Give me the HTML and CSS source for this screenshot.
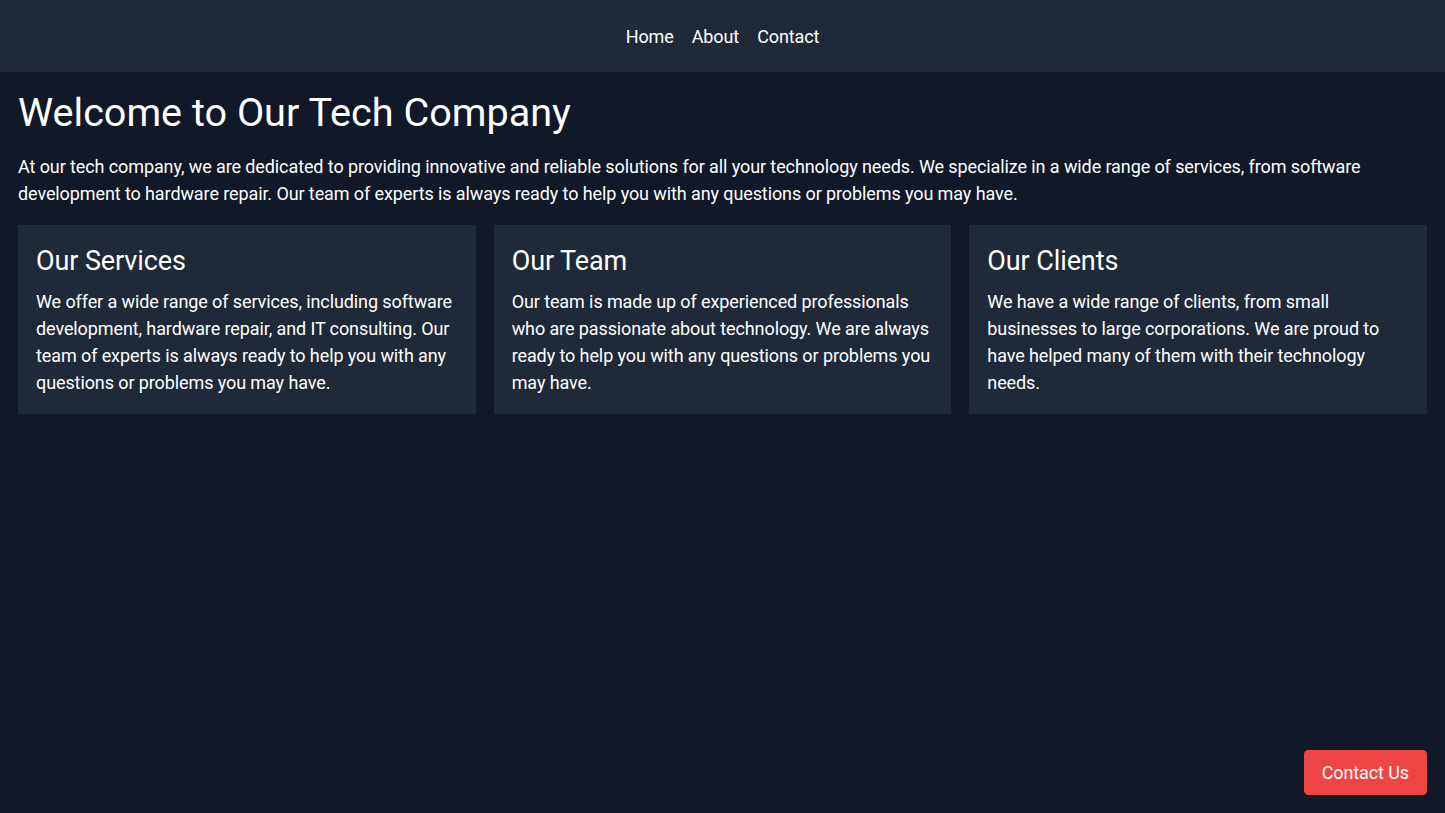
FILE: index.html
```html
<!DOCTYPE html>
<html lang="en">
<head>
<meta charset="utf-8">
<title>Our Tech Company</title>
<link rel="stylesheet" href="styles.css">
</head>
<body>
<header class="site-header">
  <nav class="nav">
    <a href="#" class="nav-link">Home</a>
    <a href="#" class="nav-link">About</a>
    <a href="#" class="nav-link">Contact</a>
  </nav>
</header>
<main class="main">
  <h1 class="title">Welcome to Our Tech Company</h1>
  <p class="intro">At our tech company, we are dedicated to providing innovative and reliable solutions for all your technology needs. We specialize in a wide range of services, from software development to hardware repair. Our team of experts is always ready to help you with any questions or problems you may have.</p>
  <div class="cards">
    <section class="card">
      <h2 class="card-title">Our Services</h2>
      <p class="card-text">We offer a wide range of services, including software development, hardware repair, and IT consulting. Our team of experts is always ready to help you with any questions or problems you may have.</p>
    </section>
    <section class="card">
      <h2 class="card-title">Our Team</h2>
      <p class="card-text">Our team is made up of experienced professionals who are passionate about technology. We are always ready to help you with any questions or problems you may have.</p>
    </section>
    <section class="card">
      <h2 class="card-title">Our Clients</h2>
      <p class="card-text">We have a wide range of clients, from small businesses to large corporations. We are proud to have helped many of them with their technology needs.</p>
    </section>
  </div>
</main>
<a href="#" class="contact-btn">Contact Us</a>
</body>
</html>
```
FILE: styles.css
```css
* { box-sizing: border-box; }
html, body { margin: 0; padding: 0; }
body {
  background: #111827;
  color: #ffffff;
  font-family: Roboto, "Liberation Sans", sans-serif;
  font-size: 18px;
  line-height: 27px;
  letter-spacing: -0.1px;
  min-height: 813px;
}
.site-header {
  background: #1f2937;
  padding: 22.5px 18px;
}
.nav {
  display: flex;
  justify-content: center;
  gap: 18px;
}
.nav-link {
  color: #ffffff;
  text-decoration: none;
  font-size: 18px;
  line-height: 27px;
}
.main {
  padding: 18px;
}
.title {
  margin: 0 0 18px;
  font-size: 39.6px;
  line-height: 45px;
  font-weight: 400;
  letter-spacing: 0;
}
.intro {
  margin: 0 0 18px;
}
.cards {
  display: grid;
  grid-template-columns: repeat(3, 1fr);
  gap: 18px;
}
.card {
  background: #1f2937;
  padding: 18px;
}
.card-title {
  margin: 0 0 9px;
  font-size: 27px;
  line-height: 36px;
  font-weight: 400;
}
.card-text {
  margin: 0;
}
.contact-btn {
  position: fixed;
  right: 18px;
  bottom: 18px;
  background: #ef4444;
  color: #ffffff;
  text-decoration: none;
  padding: 9px 18px;
  border-radius: 4.5px;
  line-height: 27px;
}
```
